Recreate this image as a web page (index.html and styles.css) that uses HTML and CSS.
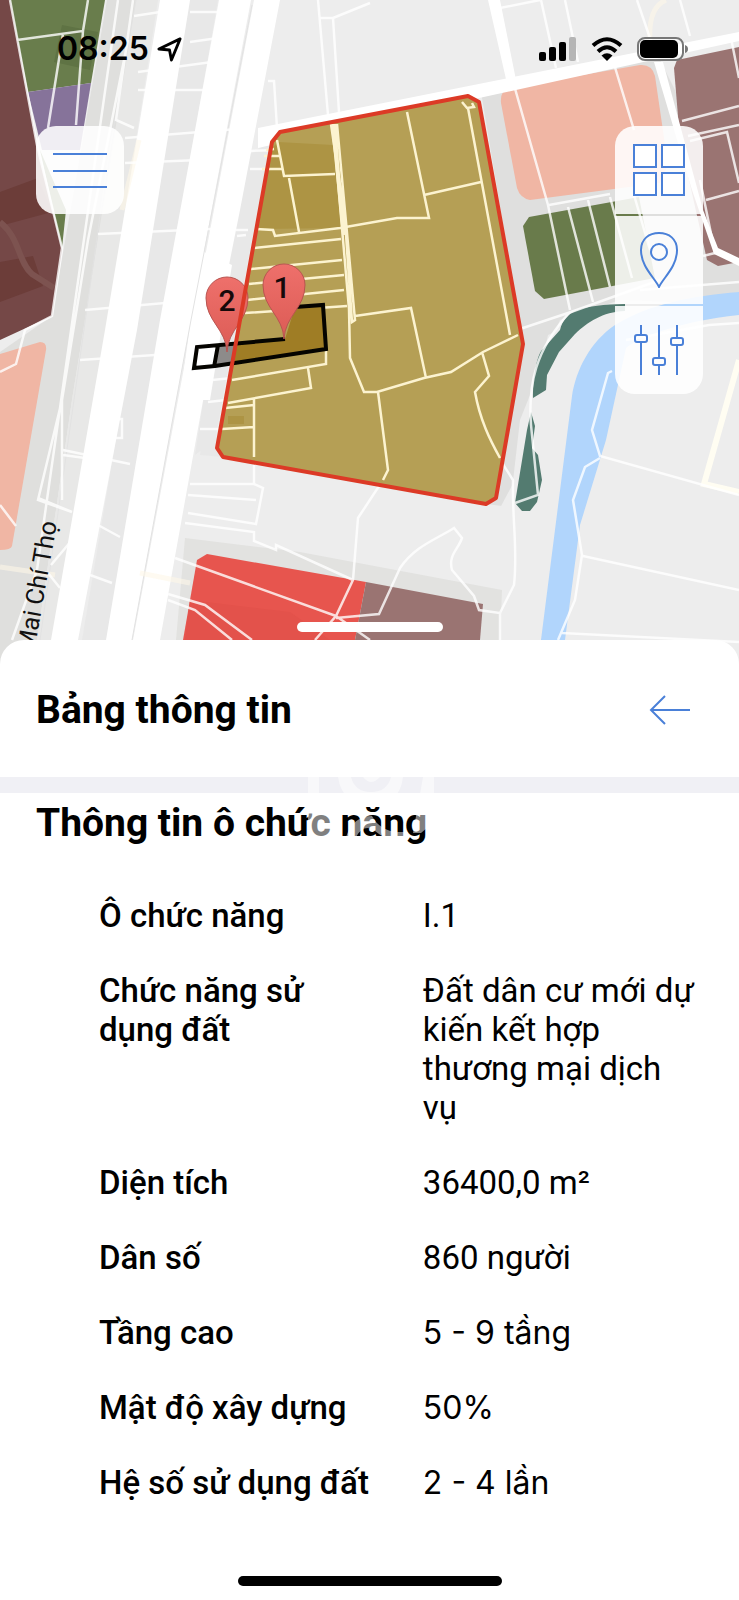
FILE: index.html
```html
<!DOCTYPE html>
<html lang="vi">
<head>
<meta charset="utf-8">
<meta name="viewport" content="width=device-width, initial-scale=1">
<title>Bảng thông tin</title>
<link rel="stylesheet" href="styles.css">
</head>
<body>
<main class="app">
  <section class="map" aria-label="Bản đồ quy hoạch">
    <svg class="map-canvas" viewBox="0 0 739 668" preserveAspectRatio="xMidYMin slice">
      <defs>
        <linearGradient id="pin" x1="0" y1="0" x2="0" y2="1">
          <stop offset="0" stop-color="#ee706b"/><stop offset="1" stop-color="#dc5b55"/>
        </linearGradient>
      </defs>
      <rect width="739" height="668" fill="#ededed"/>
      <!-- planning backdrop -->
      <path fill="#dfdfdd" d="M107 0H136L118 120L72 400L33 668H0V352L52 316Z"/>
      <path fill="#e8e8e7" d="M136 0L158 0L70 560L55 668H33L72 400Z"/>
      <path fill="#e8e8e8" d="M190 0H218L107 640H82Z M213 345L217 448L223 457L200 455Z M240 160L270 142L215 440L195 455Z"/>
      <path fill="#dfdfde" d="M481 92L655 50L690 120L739 250V305L620 300L560 320L520 420L510 507L486 504L523 344Z"/>
      <path fill="#ededed" d="M548 335L620 305H739V640H500V508L515 480Z"/>
      <path fill="#e2e2e0" d="M185 538L300 552L502 590L500 640H176Z"/>
      <!-- land use zones -->
      <path fill="#697d4c" d="M10 0H105L91 83L28 92Z M40 150L66 210L62 248Z"/>
      <path fill="#5f7344" d="M62 25L98 32L90 70L54 62Z"/>
      <path fill="#86739a" d="M28 92L91 83L80 150H42Z"/>
      <path fill="#754847" d="M0 0H10L37 145L62 250L52 316L0 340Z"/>
      <path fill="#6c3d39" d="M0 192L38 178L52 212L0 226Z M0 262L33 256L43 286L0 302Z"/>
      <path fill="none" stroke="#7d5350" stroke-width="6" d="M0 222C20 238 18 262 32 274L54 288"/>
      <path fill="#f0b6a4" d="M0 354L40 342Q47 342 46 350L12 546Q11 550 0 550Z"/>
      <path fill="#f0b6a4" d="M508 88L640 65Q652 64 655 76L668 165L660 183L530 200Q520 198 517 188L501 103Q500 91 508 88Z"/>
      <path fill="#697b4b" d="M529 217L639 197L655 278L544 299L535 291L523 226Z"/>
      <path fill="#9a7472" d="M677 60L739 47V262L718 266L707 260L680 140L674 68Z"/>
      <path fill="#e7554e" d="M197 560L207 554L366 582L355 640H183Z"/>
      <path fill="#e3524b" d="M190 600L290 612L330 640H185Z"/>
      <path fill="#9a7472" d="M366 582L483 604L480 640H355Z"/>
      <path fill="#537b70" d="M560 330C565 310 582 305 625 304V311C602 312 588 322 575 334L559 352L547 375L546 390L533 398C533 380 536 355 543 349Z M531 412L535 426L532 448L538 455L542 480L537 502L530 511H522L515 503L527 430Z"/>
      <path fill="#b1d5fc" d="M739 292V315C680 321 638 338 626 348L606 440L580 525L565 640H541L572 396C576 370 590 342 615 325C650 304 690 296 739 292Z"/>
      <!-- highways -->
      <g fill="#fff">
        <path d="M160 0H190L137 330L78 640H51L105 330Z"/>
        <path d="M219 0H251L191 320L132 640H106L160 320Z"/>
        <path d="M254 0H280L240 210L213 345L160 640H133L193 320Z"/>
        <path d="M200 250L232 265L210 400H180Z"/>
        <path d="M258 128L739 32V41L470 100L258 148Z"/>
        <path d="M488 0H500L517 85L508 88Z M654 62L663 62L703 210L718 248L739 258V266L714 254L692 190Z"/>
      </g>
      <path fill="none" stroke="#e2e2e2" d="M252 5L191 320L132 640M136 0L108 160L40 640"/>
      <path fill="none" stroke="#fdf7e8" stroke-opacity=".6" stroke-width="5" d="M666 0Q648 8 650 40M139 140L122 210M0 567L55 575M140 573L190 583"/>
      <path fill="none" stroke="#fffdf2" stroke-width="6" d="M739 360L704 484L739 492"/>
      <!-- parcel boundaries -->
      <path fill="none" stroke="#fff" stroke-opacity=".8" stroke-width="2.500" d="M10 0L37 145L62 248L52 316L25 330L16 364L0 372M17 40L83 31L88 0M63 34L48 128M83 31L76 125M118 0L37 570L12 640M128 40L88 240L62 400L38 500L72 512M133 0L116 120L134 128M134 16L160 12M190 12H218M190 42L218 38M138 72L212 62M138 90H205M125 138L250 128M125 163L200 160M98 234L232 228M85 310L165 303M80 360L155 355M63 450L130 464M63 455L85 458M38 498L72 512M62 400L62 500M98 525L120 537M90 575L112 583M115 419H122V438H115V427M51 565L72 540M48 573L60 588"/>
      <path fill="none" stroke="#fff" stroke-opacity=".8" stroke-width="2.500" d="M0 505L16 526M268 81H274L277 128M318 0L328 115M320 18L333 18L339 112M333 18L370 3M250 151L280 150M250 169H282M236 230H248M237 236L246 235M212 380L232 378M208 402L226 400M200 429H220M190 484H254L263 488L256 524L188 513M188 495L256 500M185 523L254 532V541L276 550V545L353 580M254 457V485M175 558L336 616M168 594L205 605L252 640M168 600L195 610L232 640M315 640L336 616L353 580L358 518L383 480M336 616L370 640M336 618L379 614L400 568C415 546 435 540 454 528L462 538C458 550 448 555 452 570L474 596L479 610L500 613V640M500 613L514 585C518 550 512 520 513 480L499 458M515 503L538 495L531 425"/>
      <path fill="none" stroke="#fff" stroke-opacity=".8" stroke-width="2.500" d="M541 0L556 68M565 0L578 62M500 8L540 0M637 0L654 50M680 0L690 36M514 85L548 205L570 310M614 64L634 130M549 205L610 194M568 207L593 302M588 200L610 287M610 197L632 278M634 195L650 250M731 38L739 78M682 121L739 106M688 136L739 125M690 141L727 132L739 183M706 200L739 191M703 256L715 253L700 180M520 329L571 312L660 280M531 425C528 385 535 350 570 312M640 290L739 282M626 340L709 325L739 323M612 371L608 373L592 430L600 456L739 495M600 458L585 467L573 500L582 555L575 600L558 640M583 556L739 590M562 633L739 642"/>
      <!-- selected functional block -->
      <path fill="#b59f55" d="M280 132L468 96L479 102L523 344L496 498L486 504L223 457L217 448L272 142Z"/>
      <path fill="#ad9444" d="M278 142L333 145L341 228L258 229L272 148Z M228 416H244V424H228Z"/>
      <path fill="none" stroke="#fcf3d0" stroke-width="2.500" d="M277 140L284 176L335 174M289 178L299 232M256 229L273 230L275 236L340 228L397 218L429 218L407 112M253 248L341 239M251 269L342 260M249 284L344 275M247 300L344 290M245 313L347 306M274 149L266 150M264 156H279M262 169H282M333 124L349 309L350 358L364 392L377 392L424 378L451 372L483 352L518 335M331 124L345 220L352 322L355 320L337 124M335 124L342 225M355 316L411 308L426 378M424 195L481 182M462 102L467 108L474 107L472 103M468 108L510 335M482 352L489 376L475 392C480 420 490 440 500 458M378 392L388 470L383 480M232 380L326 364V350M308 368L311 388L228 403M254 398V457M225 408L254 405M222 429L254 427"/>
      <path fill="none" stroke="#fcf3d0" stroke-width="4" d="M333 125L344 235"/>
      <!-- highlighted parcel -->
      <path fill="#fff" d="M196 348L217 346L215 366L194 368Z"/>
      <path fill="#8d8b8a" d="M217 346L236 344L231 364L215 366Z"/>
      <path fill="#9f7d25" d="M236 344L285 339L295 307L323 305L326 349L231 364Z"/>
      <path fill="none" stroke="#050400" stroke-width="4" d="M295 307L323 305L326 349L215 366L194 368L197 347L285 339M218 345L214 367"/>
      <!-- numbered pins -->
      <path fill="url(#pin)" stroke="#b95450" d="M227 352C226 329 206 321 206 298A21 21 0 0 1 248 298C248 321 228 329 227 352Z"/>
      <path fill="none" stroke="#dc3a26" stroke-width="4" stroke-linejoin="round" d="M280 132L468 96L479 102L523 344L496 498L486 504L223 457L217 448L272 142Z"/>
      <path fill="url(#pin)" stroke="#b95450" d="M284 339C283 316 263 308 263 285A21 21 0 0 1 305 285C305 308 285 316 284 339Z"/>
      <text class="pin-label" x="227" y="311">2</text>
      <text class="pin-label" x="282" y="298">1</text>
      <text class="street" transform="translate(34 653) rotate(-80)">Mai Chí Thọ</text>
    </svg>

    <div class="overlay">
      <div class="status">
        <span class="clock">08:25
          <svg width="25" height="25" viewBox="0 0 26 26" fill="none" stroke="#000" stroke-width="3" stroke-linejoin="round"><path d="M24 2L2 12.500L13 13.500L15 24Z"/></svg>
        </span>
        <span class="signals">
          <svg width="38" height="24" viewBox="0 0 38 24"><rect y="15" width="7" height="9" rx="2"/><rect x="10" y="10" width="7" height="14" rx="2"/><rect x="20" y="5" width="7" height="19" rx="2"/><rect x="30" width="7" height="24" rx="2" fill="#b5b5b5"/></svg>
          <svg width="32" height="24" viewBox="0 0 32 24"><path fill="none" stroke="#000" stroke-width="4" d="M2 8.500Q16 -4 30 8.500M7 14.500Q16 6 25 14.500"/><path d="M16 24L10.500 18.500Q16 14 21.500 18.500Z"/></svg>
          <svg width="52" height="24" viewBox="0 0 52 24"><rect x="1" y="1" width="45" height="22" rx="7" fill="#fff" fill-opacity=".5" stroke="#777" stroke-width="2"/><rect x="3" y="3" width="38" height="18" rx="5"/><path fill="#777" d="M48 8Q51 9 51 12T48 16Z"/></svg>
        </span>
      </div>
      <div class="controls">
        <button class="tile menu" type="button" aria-label="Trình đơn">
          <svg width="56" height="38" viewBox="0 0 56 38" stroke="#4a80d8" stroke-width="2"><path d="M1 3H55M1 20H55M1 36H55"/></svg>
        </button>
        <div class="tools">
          <button class="tile" type="button" aria-label="Lớp bản đồ">
            <svg width="52" height="52" viewBox="0 0 52 52" fill="#fff" stroke="#4a80d8" stroke-width="2"><path d="M1 1H23V23H1ZM29 1H51V23H29ZM1 29H23V51H1ZM29 29H51V51H29Z"/></svg>
          </button>
          <button class="tile" type="button" aria-label="Vị trí">
            <svg width="38" height="56" viewBox="0 0 38 56" fill="none" stroke="#4a80d8" stroke-width="2"><path d="M19 55C15 46 1 35 1 18C1 7 9 1 19 1S37 7 37 18C37 35 23 46 19 55Z"/><circle cx="19" cy="20" r="8"/></svg>
          </button>
          <button class="tile" type="button" aria-label="Bộ lọc">
            <svg width="52" height="50" viewBox="0 0 52 50" fill="none" stroke="#4a80d8" stroke-width="2"><path d="M8 0V10M8 17V50M26 0V33M26 40V50M44 0V13M44 20V50"/><rect x="2" y="10" width="12" height="7" rx="2"/><rect x="20" y="33" width="12" height="7" rx="2"/><rect x="38" y="13" width="12" height="7" rx="2"/></svg>
          </button>
        </div>
      </div>
      <span class="grabber"></span>
    </div>
  </section>

  <section class="sheet">
    <header class="sheet-head">
      <h1>Bảng thông tin</h1>
      <button class="back" type="button" aria-label="Quay lại">
        <svg width="42" height="30" viewBox="0 0 42 30" fill="none" stroke="#4a80d8" stroke-width="2"><path d="M16 1L2 15L16 29M2 15H41"/></svg>
      </button>
    </header>
    <div class="info">
      <h2>Thông tin ô chức năng</h2>
      <svg class="mark" width="126" height="80" viewBox="0 0 126 80" fill="#fff" fill-opacity=".5"><path d="M0 0H11V38H27V60H0Z"/><path d="M30 0H43Q47 15 63 15T83 0H95Q92 28 63 28T30 0Z"/><path d="M55 0H72Q63 10 55 0Z"/><path d="M38 60Q45 39 64 39Q72 54 90 55H100L96 62Q78 64 67 54Q56 46 48 60Z"/><path d="M115 0H126V45L113 56H105Z"/></svg>
      <table>
        <tbody>
          <tr><th scope="row">Ô chức năng</th><td>I.1</td></tr>
          <tr><th scope="row">Chức năng sử dụng đất</th><td>Đất dân cư mới dự kiến kết hợp thương mại dịch vụ</td></tr>
          <tr><th scope="row">Diện tích</th><td>36400,0 m²</td></tr>
          <tr><th scope="row">Dân số</th><td>860 người</td></tr>
          <tr><th scope="row">Tầng cao</th><td class="plain">5 - 9 tầng</td></tr>
          <tr><th scope="row">Mật độ xây dựng</th><td class="plain">50%</td></tr>
          <tr><th scope="row">Hệ số sử dụng đất</th><td class="plain">2 - 4 lần</td></tr>
        </tbody>
      </table>
    </div>
    <footer class="home"><span></span></footer>
  </section>
</main>
</body>
</html>
```
FILE: styles.css
```css
* { box-sizing: border-box; }
body { margin: 0; background: #fff; color: #000; font-family: Roboto, "Noto Sans", sans-serif; }
button { border: 0; padding: 0; background: none; cursor: pointer; }
svg { display: block; flex: none; }
.app { display: flex; flex-direction: column; min-height: 100vh; }

.map { position: relative; overflow: hidden; padding-bottom: 24px; margin-bottom: -24px; }
.map-canvas { position: absolute; inset: 0; width: 100%; height: 100%; }
.pin-label { font: 500 30px Roboto, sans-serif; fill: #16090a; text-anchor: middle; }
.street { font: 400 25px Roboto, sans-serif; fill: #111; }
.overlay { position: relative; display: flex; flex-direction: column; padding: 32px 36px 8px; }

.status { display: flex; justify-content: space-between; align-items: center; height: 34px; padding: 0 14px 0 21px; }
.clock { display: flex; align-items: center; gap: 8px; font: 600 32px/34px Inter, sans-serif; }
.signals { display: flex; align-items: center; gap: 14px; }
.controls { display: flex; justify-content: space-between; align-items: flex-start; padding-top: 60px; }
.tile { display: grid; place-items: center; width: 88px; height: 88px; background: rgba(255, 255, 255, .88); }
.menu { border-radius: 20px; }
.tools { display: grid; gap: 2px; border-radius: 20px; overflow: hidden; }
.grabber { align-self: center; width: 146px; height: 10px; margin-top: 228px; border-radius: 5px; background: #fff; }

.sheet { position: relative; display: flex; flex-direction: column; flex: 1; }
.sheet-head { display: flex; justify-content: space-between; align-items: center; height: 137px; padding: 2px 48px 0 36px; border-radius: 24px 24px 0 0; background: #fff; }
h1, h2 { margin: 0; font-size: 39px; line-height: 48px; font-weight: 700; }
.info { position: relative; flex: 1; padding: 6px 36px 0; border-top: 16px solid #f0f0f5; background: #fff; }
.mark { position: absolute; top: -16px; left: 308px; }
table { width: 100%; margin-top: 31px; border-collapse: collapse; table-layout: fixed; }
th, td { padding: 18px 0; font-size: 33px; line-height: 39px; text-align: left; vertical-align: top; }
th { width: 58%; padding-left: 63px; padding-right: 38px; font-weight: 500; }
td { font-weight: 400; }
.plain { font-family: Inter, sans-serif; font-size: 32px; }
.home { display: flex; justify-content: center; padding-bottom: 14px; background: #fff; }
.home span { width: 264px; height: 10px; border-radius: 5px; background: #000; }
```
